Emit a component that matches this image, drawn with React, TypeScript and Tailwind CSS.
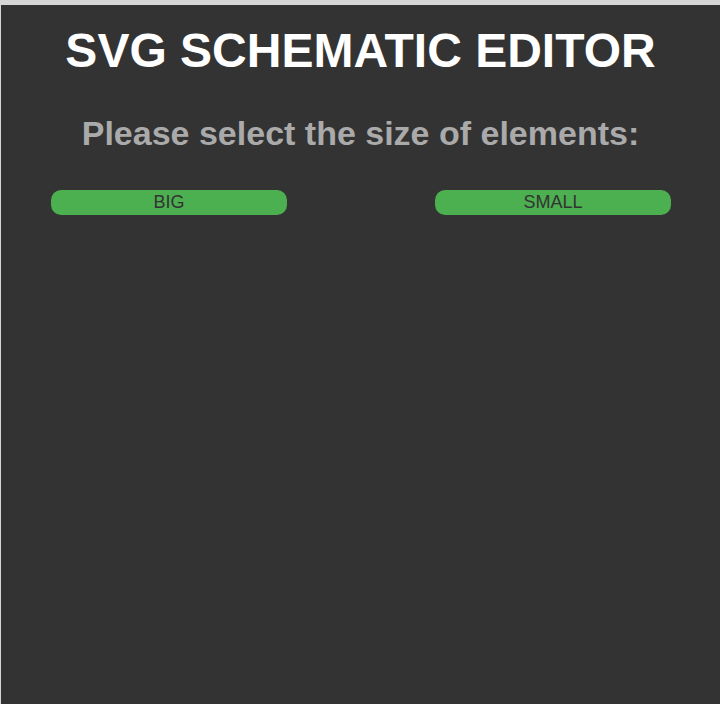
const App = () => {
  return (
    <div className="w-[723px] h-[704px] bg-white" style={{ fontFamily: '"Liberation Sans", Arial, sans-serif' }}>
      <div className="w-[720px] h-[704px] bg-[#333333] border-t-[5px] border-l border-[#d6d6d6]">
        <h1 className="pt-[18px] text-center text-[48px] leading-[56px] font-bold text-white">SVG SCHEMATIC EDITOR</h1>
        <h2 className="mt-[34px] text-center text-[34px] leading-[40px] font-bold text-[#aaaaaa]">
          Please select the size of elements:
        </h2>
        <div className="mt-[37px] flex justify-between pl-[50px] pr-[49px]">
          <button className="w-[236px] h-[25px] rounded-[10px] bg-[#4caf50] text-[18px] leading-[25px] text-[#333333]">BIG</button>
          <button className="w-[236px] h-[25px] rounded-[10px] bg-[#4caf50] text-[18px] leading-[25px] text-[#333333]">SMALL</button>
        </div>
      </div>
    </div>
  );
};

export default App;
